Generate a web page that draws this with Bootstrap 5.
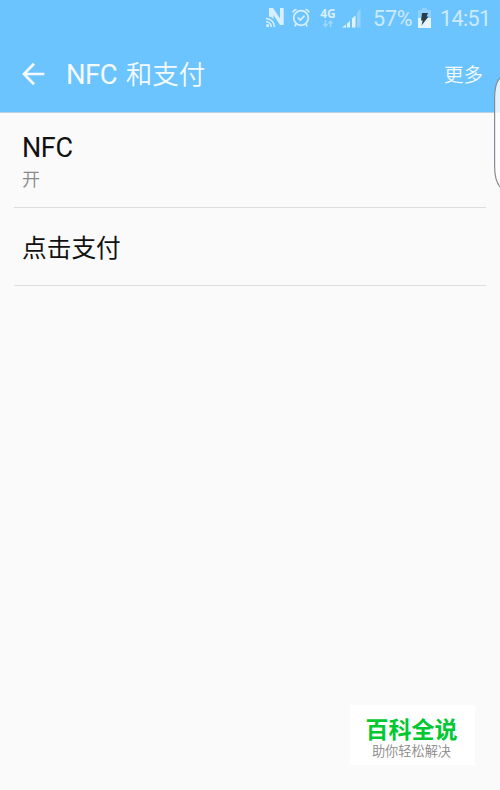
<!DOCTYPE html>
<html lang="zh-CN">
<head>
  <meta charset="UTF-8" />
  <meta name="viewport" content="width=device-width, initial-scale=1.0"/>
  <title>NFC 和支付</title>
  <link href="https://cdn.jsdelivr.net/npm/bootstrap@5.3.0/dist/css/bootstrap.min.css" rel="stylesheet">
  <style>
    body {
      background: #fafafa;
      font-family: Roboto, "Noto Sans CJK SC", sans-serif;
      color: #111;
      overflow: hidden;
    }
    .screen { height: 790px; }
    .topbar { background: #6cc4ff; height: 113px; border-bottom: 1px solid #b4d3e8; }
    .status { height: 36px; padding-right: 8px; color: #cdeafe; font-size: 21.5px; line-height: 36px; }
    .status svg { display: block; flex: none; }
    .icon-nfc { margin-right: 7px; }
    .icon-alarm { margin-right: 9px; }
    .network { width: 18px; margin-right: 5px; color: #d8effe; }
    .network-name { font: bold 12px/11px "Open Sans", sans-serif; }
    .icon-signal { margin-right: 12px; }
    .battery-level { width: 45px; padding-top: 2px; letter-spacing: -.2px; }
    .clock { width: 52px; margin-left: 9px; padding-top: 2px; letter-spacing: -.6px; }
    .titlebar { height: 76px; padding: 0 17px 0 22px; color: #f4faff; }
    .page-title { font-size: 26.5px; line-height: 76px; margin-left: 20px; padding-top: 1px; font-weight: 350; }
    .page-title .latin { font-size: 27.5px; font-weight: 400; letter-spacing: -.5px; margin-right: 2px; }
    .more { font-size: 19.5px; padding-top: 3px; font-weight: 350; }
    .settings { padding: 0 14px; }
    .setting { border-bottom: 1px solid #dedede; padding: 0 8px; }
    .setting-nfc { height: 95px; padding-top: 18px; }
    .setting-pay { height: 78px; padding-top: 5px; }
    .setting-name { font-size: 27px; line-height: 34px; letter-spacing: -.4px; }
    .setting-pay .setting-name { font-size: 24.7px; letter-spacing: 0; }
    .setting-state { font-size: 18px; line-height: 30px; color: #8a8a8a; font-weight: 350; }
    .edge-handle { left: 494px; top: 76px; }
    .brand { width: 125px; height: 60px; margin: auto 25px 25px auto; background: #fff; padding-top: 11px; padding-right: 2px; }
    .brand-name { font-size: 23px; line-height: 29px; font-weight: 700; color: #00c832; }
    .brand-line { font-size: 13.2px; line-height: 13px; font-weight: 350; color: #888; }
  </style>
</head>
<body>
  <div class="screen d-flex flex-column position-relative">
    <header class="topbar">
      <div class="status d-flex align-items-center justify-content-end">
        <svg class="icon-nfc" width="19" height="20" viewBox="0 0 19 20">
          <path d="M3 8.500V0h4l7 10.500V0h3.700v17H14L7.500 7v4Q6 8.500 3 8.500Z" fill="#d8effe"/>
          <circle cx="1.600" cy="17.600" r="1.600" fill="#d8effe"/>
          <path d="M0 13.800a5 5 0 0 1 5.200 5.200M0 10.600a8.200 8.200 0 0 1 8.400 8.400" fill="none" stroke="#d8effe" stroke-width="1.600"/>
        </svg>
        <svg class="icon-alarm" width="18" height="20" viewBox="0 0 18 20" fill="none" stroke="#d8effe" stroke-width="1.700">
          <circle cx="9" cy="10" r="7.300"/>
          <path d="M5.800 9.500l2.500 2.500 4.300-4.300M.8 4.300Q2 2.200 4.500 1.300M17.200 4.300Q16 2.200 13.500 1.300M4 16L3 18.500M14 16l1 2.500"/>
        </svg>
        <div class="network d-flex flex-column align-items-center">
          <span class="network-name">4G</span>
          <svg width="10" height="9" viewBox="0 0 10 9" fill="none" stroke="#a0d8fe" stroke-width="1.400">
            <path d="M2.500 1v6M.5 5l2 2.500 2-2.500M7.500 8V2M5.500 4.500l2-2.500 2 2.500"/>
          </svg>
        </div>
        <svg class="icon-signal" width="19" height="19" viewBox="0 0 19 19" fill="#e0f2fe">
          <path d="M0 18.500L4 15.500v3zM5 14.500l3-2.500v6.500H5zM10 9.500L13.500 6.500v12H10z"/>
          <path d="M15 4L18.500 0v18.500H15z" fill="#94d3fe"/>
        </svg>
        <span class="battery-level">57%</span>
        <svg width="13" height="20" viewBox="0 0 13 20">
          <path d="M4 0h5v2h4v8H0V2h4z" fill="#8fd0fc"/>
          <path d="M0 10h13v10H0z" fill="#e5f4fe"/>
          <path d="M4 5h6L8.500 8.500h2L3.500 17.500l1.200-5H3z" fill="#273e4d"/>
        </svg>
        <span class="clock">14:51</span>
      </div>
      <div class="titlebar d-flex align-items-center">
        <svg width="24" height="24" viewBox="0 0 24 24" fill="none" stroke="#f4faff" stroke-width="2.700">
          <path d="M22.300 12H2.500M12 1.700L2 12l10 10.300"/>
        </svg>
        <span class="page-title"><span class="latin">NFC</span> 和支付</span>
        <span class="more ms-auto">更多</span>
      </div>
    </header>

    <main class="settings">
      <div class="setting setting-nfc">
        <div class="setting-name">NFC</div>
        <div class="setting-state">开</div>
      </div>
      <div class="setting setting-pay d-flex align-items-center">
        <div class="setting-name">点击支付</div>
      </div>
    </main>

    <svg class="edge-handle position-absolute" width="6" height="114" viewBox="0 0 6 114">
      <path d="M7 1Q.6 6 .6 22v68q0 16 6.400 22" fill="#fff" fill-opacity=".8" stroke="#858b90" stroke-width="1.200"/>
    </svg>

    <div class="brand text-center">
      <div class="brand-name">百科全说</div>
      <div class="brand-line">助你轻松解决</div>
    </div>
  </div>
  <script src="https://cdn.jsdelivr.net/npm/bootstrap@5.3.0/dist/js/bootstrap.bundle.min.js"></script>
</body>
</html>
